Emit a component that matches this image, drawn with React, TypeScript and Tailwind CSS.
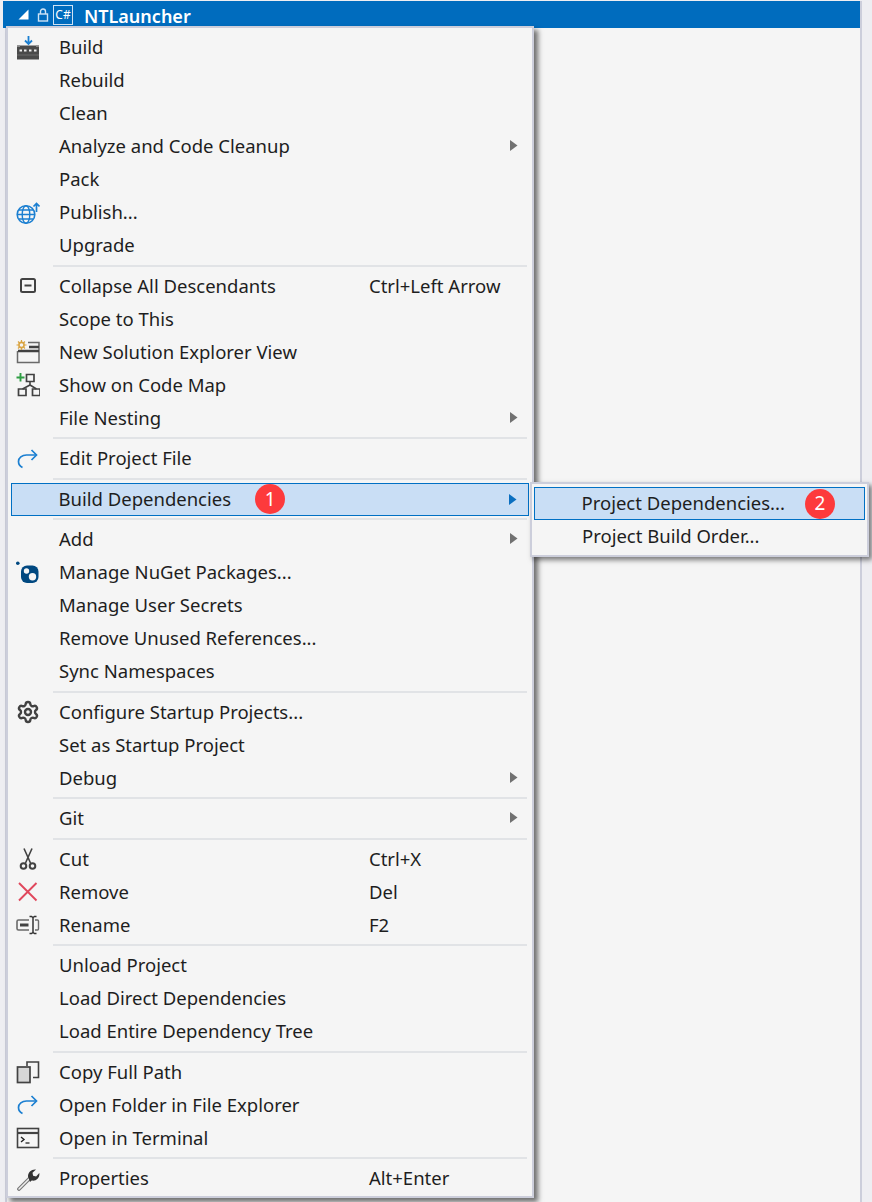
import React from "react";
import { Settings } from "lucide-react";

type Entry = {
  label?: string;
  icon?: React.ReactNode;
  shortcut?: string;
  arrow?: boolean;
  active?: boolean;
  badge?: string;
};

const GRAY = "#424242";
const BLUE = "#1b7fd1";

function Svg({ children }: { children: React.ReactNode }) {
  return (
    <svg width="24" height="24" viewBox="0 0 24 24" fill="none">
      {children}
    </svg>
  );
}

const BuildIcon = (
  <Svg>
    <path d="M12.5 0v8M9 4.500L12.500 8 16 4.500" stroke={BLUE} strokeWidth="1.8" />
    <path d="M1 23.500V9.500h22v14z" fill="#4a4a4a" />
    <path d="M1 9.500h3v1.500H1zM20 9.500h3V11h-3z" fill="#8a8a8a" />
    <path d="M3.500 14.500h2.500M8 14.500h2.500M13 14.500h2.500M18 14.500h2.500" stroke="#f0f0f0" strokeWidth="2" />
    <path d="M1 19h22" stroke="#6a6a6a" strokeWidth="1" />
  </Svg>
);

const PublishIcon = (
  <Svg>
    <circle cx="10" cy="13.500" r="8.800" stroke={BLUE} strokeWidth="1.600" />
    <ellipse cx="10" cy="13.500" rx="3.800" ry="8.800" stroke={BLUE} strokeWidth="1.400" />
    <path d="M1.500 13.500h17M3 9h14M3 18h14" stroke={BLUE} strokeWidth="1.400" />
    <path d="M20.500 11V2.500M17.500 5.500l3-3 3 3" stroke={BLUE} strokeWidth="1.700" />
  </Svg>
);

const CollapseIcon = (
  <Svg>
    <rect x="5" y="5" width="14" height="13" rx="1.500" stroke={GRAY} strokeWidth="2" />
    <path d="M8.500 11.500h7" stroke={GRAY} strokeWidth="2" />
  </Svg>
);

const NewViewIcon = (
  <Svg>
    <path d="M1.500 11v11.500h21.500V2.500H12" stroke="#6a6a6a" strokeWidth="1.500" />
    <path d="M2 11H23M13 7h10" stroke={GRAY} strokeWidth="2.400" />
    <circle cx="5.500" cy="5" r="2.600" stroke="#d9a441" strokeWidth="1.600" />
    <path d="M5.500 0v2M5.500 8v2M.5 5h2M8.500 5h2M2 1.500l1.400 1.400M7.600 7.100L9 8.500M2 8.500l1.400-1.400M7.600 2.900L9 1.500" stroke="#d9a441" strokeWidth="1.200" />
  </Svg>
);

const CodeMapIcon = (
  <Svg>
    <path d="M4.500 0v8.500M.5 4.500h8" stroke="#2f9e44" strokeWidth="1.900" />
    <path d="M10.500 1.500h7.500v7h-7.500z" stroke={GRAY} strokeWidth="1.700" />
    <path d="M14 8.500v3.500M14 12L6.500 16M14 12l6.500 4" stroke={GRAY} strokeWidth="1.600" />
    <path d="M2.500 16h7.500v6.500h-7.500zM16.500 16H24v6.500h-7.500z" stroke={GRAY} strokeWidth="1.700" />
  </Svg>
);

const RedoIcon = (
  <Svg>
    <path d="M20 8H10.500C6 8 2.500 10.800 2.500 14.500c0 2.600 1.600 4.800 4 6" stroke={BLUE} strokeWidth="1.700" />
    <path d="M15.500 3l5 5-5 5" stroke={BLUE} strokeWidth="1.700" />
  </Svg>
);

const NuGetIcon = (
  <Svg>
    <circle cx="1.800" cy="2.200" r="1.800" fill="#004880" />
    <rect x="5" y="4.500" width="17.500" height="17.500" rx="6" fill="#004880" />
    <circle cx="10.500" cy="10" r="2.700" fill="#f5f5f5" />
    <circle cx="16.500" cy="15.800" r="3.700" fill="#f5f5f5" />
  </Svg>
);

const CutIcon = (
  <Svg>
    <path d="M8 1.500l6.500 14.500M16 1.500L9.500 16" stroke={GRAY} strokeWidth="1.600" />
    <circle cx="7.500" cy="19" r="2.800" stroke={GRAY} strokeWidth="2" />
    <circle cx="16.500" cy="19" r="2.800" stroke={GRAY} strokeWidth="2" />
  </Svg>
);

const RemoveIcon = (
  <Svg>
    <path d="M3 3l17.500 17.500M20.500 3L3 20.500" stroke="#e0475c" strokeWidth="1.900" />
  </Svg>
);

const RenameIcon = (
  <Svg>
    <path d="M13 7H2.500A1.500 1.500 0 0 0 1 8.500v7A1.500 1.500 0 0 0 2.500 17H13" stroke="#6a6a6a" strokeWidth="1.600" />
    <path d="M4 12h8.500" stroke={GRAY} strokeWidth="3" />
    <path d="M19 7h2.500a1 1 0 0 1 1 1v8a1 1 0 0 1-1 1H19" stroke="#6a6a6a" strokeWidth="1.400" />
    <path d="M13.500 3.500h2l1.500 1 1.500-1h2M17 4.500v15M13.500 20.500h2l1.500-1 1.500 1h2" stroke="#333" strokeWidth="1.500" />
  </Svg>
);

const CopyIcon = (
  <Svg>
    <path d="M11 6V2h11.500v15.500H17" stroke={GRAY} strokeWidth="1.600" />
    <rect x="1.500" y="7" width="12.500" height="15.500" fill="#d6d6d6" stroke={GRAY} strokeWidth="1.700" />
  </Svg>
);

const TerminalIcon = (
  <Svg>
    <rect x="1.500" y="2.500" width="21" height="19" stroke={GRAY} strokeWidth="1.600" />
    <path d="M1.500 7h21" stroke={GRAY} strokeWidth="2.200" />
    <path d="M5 11l3 2.500L5 16" stroke="#222" strokeWidth="1.400" />
    <path d="M9.500 17h4" stroke="#222" strokeWidth="1.300" />
  </Svg>
);

const WrenchIcon = (
  <Svg>
    <path d="M3 22l11-11" stroke="#777" strokeWidth="3.800" strokeLinecap="round" />
    <path d="M3 22l11-11" stroke="#efefef" strokeWidth="1.500" strokeLinecap="round" />
    <path d="M12 9.500C12 5 15.500 2 20 2.500l-3.500 3.200.6 3 3 .7L23.300 6c.8 4.500-3 8.500-7.600 7.500L14 15z" fill="#333" />
  </Svg>
);

const MENU: Entry[] = [
  { label: "Build", icon: BuildIcon },
  { label: "Rebuild" },
  { label: "Clean" },
  { label: "Analyze and Code Cleanup", arrow: true },
  { label: "Pack" },
  { label: "Publish...", icon: PublishIcon },
  { label: "Upgrade" },
  {},
  { label: "Collapse All Descendants", icon: CollapseIcon, shortcut: "Ctrl+Left Arrow" },
  { label: "Scope to This" },
  { label: "New Solution Explorer View", icon: NewViewIcon },
  { label: "Show on Code Map", icon: CodeMapIcon },
  { label: "File Nesting", arrow: true },
  {},
  { label: "Edit Project File", icon: RedoIcon },
  {},
  { label: "Build Dependencies", arrow: true, active: true, badge: "1" },
  {},
  { label: "Add", arrow: true },
  { label: "Manage NuGet Packages...", icon: NuGetIcon },
  { label: "Manage User Secrets" },
  { label: "Remove Unused References..." },
  { label: "Sync Namespaces" },
  {},
  { label: "Configure Startup Projects...", icon: <Settings size={24} strokeWidth={2.4} color={GRAY} /> },
  { label: "Set as Startup Project" },
  { label: "Debug", arrow: true },
  {},
  { label: "Git", arrow: true },
  {},
  { label: "Cut", icon: CutIcon, shortcut: "Ctrl+X" },
  { label: "Remove", icon: RemoveIcon, shortcut: "Del" },
  { label: "Rename", icon: RenameIcon, shortcut: "F2" },
  {},
  { label: "Unload Project" },
  { label: "Load Direct Dependencies" },
  { label: "Load Entire Dependency Tree" },
  {},
  { label: "Copy Full Path", icon: CopyIcon },
  { label: "Open Folder in File Explorer", icon: RedoIcon },
  { label: "Open in Terminal", icon: TerminalIcon },
  {},
  { label: "Properties", icon: WrenchIcon, shortcut: "Alt+Enter" },
];

function Badge({ n }: { n: string }) {
  return (
    <span className="flex h-[30px] w-[30px] items-center justify-center rounded-full bg-[#fd3a3c] text-[19px] leading-none text-white">
      {n}
    </span>
  );
}

function MenuRow({ entry }: { entry: Entry }) {
  if (!entry.label) {
    return (
      <div className="flex h-[7.5px] items-center pl-[45px] pr-[5px]">
        <div className="h-[2px] w-full bg-[#e1e3e6]" />
      </div>
    );
  }
  return (
    <div
      className={`relative flex h-[33px] items-center ${
        entry.active ? "mx-[3px] border-[1.5px] border-[#0070c4] bg-[#c9def5]" : "mx-[5px]"
      }`}
    >
      <div className="flex w-[30px] shrink-0 items-center justify-center">{entry.icon}</div>
      <span className={entry.active ? "ml-[16.5px]" : "ml-[16px]"}>{entry.label}</span>
      {entry.badge && (
        <span className="ml-[24px]">
          <Badge n={entry.badge} />
        </span>
      )}
      {entry.shortcut && <span className="absolute left-[356px]">{entry.shortcut}</span>}
      {entry.arrow && (
        <svg className="absolute left-[497px] top-[10px]" width="8" height="11" viewBox="0 0 8 11">
          <path d="M0 0l7.500 5.500L0 11z" fill={entry.active ? "#0a6fc0" : "#717171"} />
        </svg>
      )}
    </div>
  );
}

export default function App() {
  return (
    <div
      className="relative h-[1202px] w-[872px] overflow-hidden bg-[#eeeef2] text-[18.5px] leading-none text-[#1e1e1e]"
      style={{ fontFamily: '"Noto Sans", sans-serif' }}
    >
      {/* explorer panel behind the menus */}
      <div className="ml-[5px] mr-[10px] h-full border-x-[2px] border-[#cccedb] bg-[#f5f5f5]">
        <div className="-ml-[4px] mt-[1px] flex h-[27px] items-center bg-[#006cbe] pl-[15px] text-white">
          <svg width="11" height="11" viewBox="0 0 11 11">
            <path d="M10.500 .5v10H.5z" fill="#fff" />
          </svg>
          <svg className="ml-[8px]" width="12" height="14" viewBox="0 0 12 14" fill="none">
            <rect x="1.500" y="6" width="9" height="7" stroke="#cfe3f5" strokeWidth="1.400" />
            <path d="M3.500 6V3.500a2.500 2.500 0 0 1 5 0V6" stroke="#cfe3f5" strokeWidth="1.400" />
          </svg>
          <span className="ml-[4px] flex h-[20px] w-[20px] items-center justify-center border border-[#cfe3f5] text-[12px]">
            C#
          </span>
          <span className="ml-[11px] pt-[3px] text-[18px] font-semibold">NTLauncher</span>
        </div>
      </div>

      {/* context menu */}
      <div className="absolute left-[6px] top-[26px] h-[1172px] w-[528px] border-[2px] border-[#cccedb] bg-[#f5f5f5] pt-[3px] shadow-[4px_4px_5px_rgba(0,0,0,0.55)]">
        {MENU.map((entry, i) => (
          <MenuRow key={i} entry={entry} />
        ))}
      </div>

      {/* submenu */}
      <div className="absolute left-[530px] top-[482px] h-[75px] w-[339px] border-[2px] border-[#cccedb] bg-[#f5f5f5] pt-[3px] shadow-[3px_3px_5px_rgba(0,0,0,0.5)]">
        <div className="mx-[2px] flex h-[33px] items-center border-[1.5px] border-[#0070c4] bg-[#c9def5] pl-[46.5px]">
          <span>Project Dependencies...</span>
          <span className="ml-[20px]">
            <Badge n="2" />
          </span>
        </div>
        <div className="flex h-[33px] items-center pl-[50px]">Project Build Order...</div>
      </div>
    </div>
  );
}
